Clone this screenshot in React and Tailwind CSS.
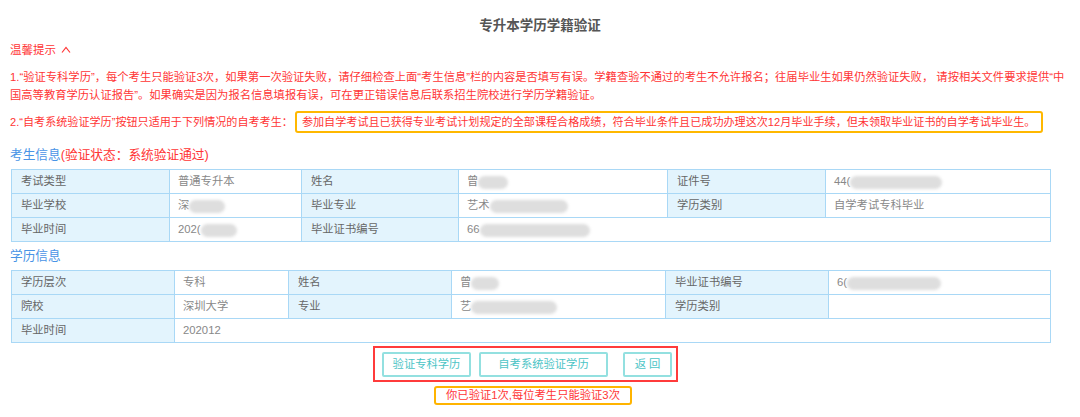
import React from 'react';

const Blur = ({ w }) => (
  <span
    className="inline-block align-middle h-[13px] rounded-full bg-[#dedede] blur-[1.5px]"
    style={{ width: w }}
  />
);

const Label = ({ children }) => (
  <td className="border border-[#a9d8f6] bg-[#e3f4fd] pl-[9px] text-[#666] whitespace-nowrap">{children}</td>
);

const Value = ({ children, colSpan }) => (
  <td colSpan={colSpan} className="border border-[#a9d8f6] bg-white pl-[8px] text-[#888] whitespace-nowrap">
    {children}
  </td>
);

const App = () => {
  return (
    <div
      className="w-[1080px] h-[417px] bg-white overflow-hidden text-[11.3px]"
      style={{ fontFamily: '"Liberation Sans", "Noto Sans CJK SC", sans-serif' }}
    >
      {/* Title */}
      <div className="pt-[17px] text-center text-[13.5px] leading-[18px] font-bold text-[#555]">
        专升本学历学籍验证
      </div>

      {/* Tips */}
      <div className="px-[10px] text-[#ff3535]">
        <div className="mt-[6px] leading-[18px] text-[11.5px] flex items-center gap-[5px]">
          温馨提示
          <svg className="w-[10px] h-[8px]" viewBox="0 0 10 8" fill="none" stroke="#ff3535" strokeWidth="1.2">
            <path d="M1 6.5 L5 1.5 L9 6.5" />
          </svg>
        </div>
        <p className="mt-[9px] leading-[18px] whitespace-nowrap">
          1.“验证专科学历”，每个考生只能验证3次，如果第一次验证失败，请仔细检查上面“考生信息”栏的内容是否填写有误。学籍查验不通过的考生不允许报名；往届毕业生如果仍然验证失败， 请按相关文件要求提供“中
          <br />
          国高等教育学历认证报告”。如果确实是因为报名信息填报有误，可在更正错误信息后联系招生院校进行学历学籍验证。
        </p>
        <div className="mt-[7px] h-[22px] flex items-center whitespace-nowrap text-[11.1px]">
          <span>2.“自考系统验证学历”按钮只适用于下列情况的自考考生：</span>
          <span className="ml-[2px] h-[22px] flex items-center border-2 border-[#ffb800] rounded-[3px] pl-[5px] pr-[6px]">
            参加自学考试且已获得专业考试计划规定的全部课程合格成绩，符合毕业条件且已成功办理这次12月毕业手续，但未领取毕业证书的自学考试毕业生。
          </span>
        </div>
      </div>

      {/* 考生信息 */}
      <div className="mt-[13px] px-[10px] leading-[18px] text-[12.7px]">
        <span className="text-[#4a94e6]">考生信息</span>
        <span className="text-[#ff3535]">(验证状态：系统验证通过)</span>
      </div>
      <table className="mt-[5px] ml-[11px] w-[1039px] border-collapse table-fixed">
        <colgroup>
          <col className="w-[158px]" />
          <col className="w-[132px]" />
          <col className="w-[157px]" />
          <col className="w-[209px]" />
          <col className="w-[158px]" />
          <col className="w-[225px]" />
        </colgroup>
        <tbody>
          <tr className="h-[24px]">
            <Label>考试类型</Label>
            <Value>普通专升本</Value>
            <Label>姓名</Label>
            <Value>曾<Blur w={30} /></Value>
            <Label>证件号</Label>
            <Value>44(<Blur w={92} /></Value>
          </tr>
          <tr className="h-[24px]">
            <Label>毕业学校</Label>
            <Value>深<Blur w={36} /></Value>
            <Label>毕业专业</Label>
            <Value>艺术<Blur w={78} /></Value>
            <Label>学历类别</Label>
            <Value>自学考试专科毕业</Value>
          </tr>
          <tr className="h-[24px]">
            <Label>毕业时间</Label>
            <Value>202(<Blur w={36} /></Value>
            <Label>毕业证书编号</Label>
            <Value colSpan={3}>66<Blur w={110} /></Value>
          </tr>
        </tbody>
      </table>

      {/* 学历信息 */}
      <div className="mt-[5px] px-[10px] leading-[18px] text-[12.7px] text-[#4a94e6]">学历信息</div>
      <table className="mt-[5px] ml-[11px] w-[1039px] border-collapse table-fixed">
        <colgroup>
          <col className="w-[163px]" />
          <col className="w-[114px]" />
          <col className="w-[163px]" />
          <col className="w-[214px]" />
          <col className="w-[163px]" />
          <col className="w-[222px]" />
        </colgroup>
        <tbody>
          <tr className="h-[24px]">
            <Label>学历层次</Label>
            <Value>专科</Value>
            <Label>姓名</Label>
            <Value>曾<Blur w={28} /></Value>
            <Label>毕业证书编号</Label>
            <Value>6(<Blur w={94} /></Value>
          </tr>
          <tr className="h-[24px]">
            <Label>院校</Label>
            <Value>深圳大学</Value>
            <Label>专业</Label>
            <Value>艺<Blur w={86} /></Value>
            <Label>学历类别</Label>
            <Value></Value>
          </tr>
          <tr className="h-[24px]">
            <Label>毕业时间</Label>
            <Value colSpan={5}>202012</Value>
          </tr>
        </tbody>
      </table>

      {/* Buttons */}
      <div className="mt-[3px] ml-[11px] w-[1039px] pr-[10px] flex justify-center">
        <div className="h-[36px] border-2 border-[#ff3b3b] pl-[7px] pr-[4px] pt-[4px] flex items-start">
          <button className="h-[25px] w-[89px] border-2 border-[#93e0e0] rounded-[2px] text-[#4cc4c6] bg-white">
            验证专科学历
          </button>
          <button className="ml-[8px] h-[25px] w-[129px] border-2 border-[#93e0e0] rounded-[2px] text-[#4cc4c6] bg-white">
            自考系统验证学历
          </button>
          <button className="ml-[15px] h-[25px] w-[49px] border-2 border-[#93e0e0] rounded-[2px] text-[#4cc4c6] bg-white">
            返 回
          </button>
        </div>
      </div>

      {/* Note */}
      <div className="mt-[4px] ml-[11px] w-[1039px] pl-[5px] flex justify-center">
        <div className="h-[19px] w-[198px] flex items-center justify-center border-2 border-[#ffb400] rounded-[3px] text-[#ff3535] whitespace-nowrap">
          你已验证1次,每位考生只能验证3次
        </div>
      </div>
    </div>
  );
};

export default App;
